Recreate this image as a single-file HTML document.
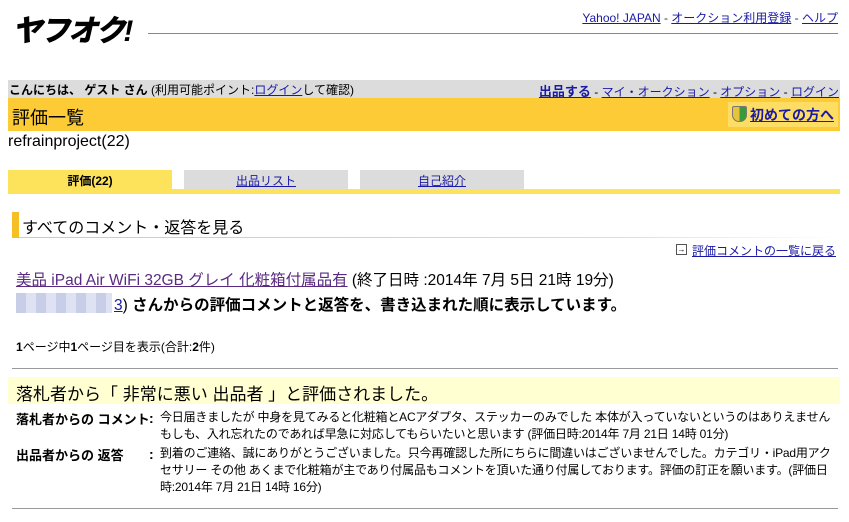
<!DOCTYPE html>
<html><head><meta charset="utf-8"><style>
body{margin:0;width:849px;height:522px;background:#fff;font-family:"Liberation Sans","Noto Sans CJK JP",sans-serif;color:#000;position:relative;overflow:hidden}
.a{position:absolute;white-space:nowrap}
a{color:#1a1aa6;text-decoration:underline}
</style></head><body>
<div class="a" style="left:12px;top:6px;font-size:30px;font-weight:900;font-style:italic;letter-spacing:-2px">ヤフオク!</div>
<div class="a" style="left:148px;top:33px;width:690px;height:1px;background:#888"></div>
<div class="a" style="right:11px;top:9px;font-size:12px;color:#333"><a href="#">Yahoo! JAPAN</a> - <a href="#">オークション利用登録</a> - <a href="#">ヘルプ</a></div>

<div class="a" style="left:8px;top:80px;width:832px;height:18px;background:#dcdcdc"></div>
<div class="a" style="left:9px;top:81px;font-size:12px"><b>こんにちは、 ゲスト さん</b> (利用可能ポイント:<a href="#">ログイン</a>して確認)</div>
<div class="a" style="right:10px;top:81px;font-size:12px"><a href="#" style="font-weight:bold;font-size:13px">出品する</a> - <a href="#">マイ・オークション</a> - <a href="#">オプション</a> - <a href="#">ログイン</a></div>

<div class="a" style="left:8px;top:98px;width:832px;height:33px;background:#fdcb36"></div>
<div class="a" style="left:12px;top:104px;font-size:18px">評価一覧</div>
<div class="a" style="left:728px;top:102px;width:110px;height:25px;background:#fddd63"></div>
<div class="a" style="left:732px;top:106px;width:13px;height:14px;background:linear-gradient(90deg,#e8c23a 50%,#3a9a3a 50%);border-radius:2px 2px 7px 7px;border:1px solid #777"></div>
<div class="a" style="left:750px;top:105px;font-size:14px;font-weight:bold"><a href="#">初めての方へ</a></div>

<div class="a" style="left:8px;top:133px;font-size:16px">refrainproject(22)</div>

<div class="a" style="left:8px;top:170px;width:164px;height:20px;background:#fde35c"></div>
<div class="a" style="left:184px;top:170px;width:164px;height:19px;background:#dcdcdc"></div>
<div class="a" style="left:360px;top:170px;width:164px;height:19px;background:#dcdcdc"></div>
<div class="a" style="left:8px;top:189px;width:832px;height:5px;background:#fde35c"></div>
<div class="a" style="left:8px;top:172px;width:164px;text-align:center;font-size:12px;font-weight:bold">評価(22)</div>
<div class="a" style="left:184px;top:172px;width:164px;text-align:center;font-size:12px"><a href="#">出品リスト</a></div>
<div class="a" style="left:360px;top:172px;width:164px;text-align:center;font-size:12px"><a href="#">自己紹介</a></div>

<div class="a" style="left:12px;top:212px;width:7px;height:26px;background:#f4c026"></div>
<div class="a" style="left:19px;top:237px;width:820px;height:1px;background:linear-gradient(90deg,#f0d040,#f5e070 70%,#fff)"></div>
<div class="a" style="left:22px;top:214px;font-size:16px">すべてのコメント・返答を見る</div>

<div class="a" style="left:676px;top:244px;width:9px;height:9px;border:1px solid #555;font-size:8px;line-height:9px;text-align:center">→</div>
<div class="a" style="left:692px;top:242px;font-size:12px"><a href="#">評価コメントの一覧に戻る</a></div>

<div class="a" style="left:16px;top:268px;font-size:15.5px"><a href="#" style="color:#5a2a80">美品 iPad Air WiFi 32GB グレイ 化粧箱付属品有</a> (終了日時 :2014年 7月 5日 21時 19分)</div>
<div class="a" style="left:16px;top:293px;width:96px;height:20px;background:repeating-linear-gradient(90deg,#c8cde8 0 10px,#dfe2f2 10px 20px)"></div>
<div class="a" style="left:114px;top:293px;font-size:15.5px"><a href="#" style="font-weight:normal">3</a>) <b>さんからの評価コメントと返答を、書き込まれた順に表示しています。</b></div>

<div class="a" style="left:16px;top:338px;font-size:12px"><b>1</b>ページ中<b>1</b>ページ目を表示(合計:<b>2</b>件)</div>

<div class="a" style="left:12px;top:368px;width:826px;height:1px;background:#999"></div>
<div class="a" style="left:8px;top:377px;width:832px;height:27px;background:#ffffd2"></div>
<div class="a" style="left:16px;top:380px;font-size:17px">落札者から「 非常に悪い 出品者 」と評価されました。</div>

<div class="a" style="left:16px;top:409px;font-size:13px;font-weight:bold">落札者からの コメント</div>
<div class="a" style="left:149px;top:410px;font-size:14px;font-weight:bold">:</div>
<div class="a" style="left:160px;top:409px;font-size:12px;line-height:17px;width:676px;white-space:normal;letter-spacing:-0.2px">今日届きましたが 中身を見てみると化粧箱とACアダプタ、ステッカーのみでした 本体が入っていないというのはありえません もしも、入れ忘れたのであれば早急に対応してもらいたいと思います (評価日時:2014年 7月 21日 14時 01分)</div>
<div class="a" style="left:16px;top:445px;font-size:13px;font-weight:bold">出品者からの 返答</div>
<div class="a" style="left:149px;top:446px;font-size:14px;font-weight:bold">:</div>
<div class="a" style="left:160px;top:445px;font-size:12px;line-height:17px;width:676px;white-space:normal;letter-spacing:-0.2px">到着のご連絡、誠にありがとうございました。只今再確認した所にちらに間違いはございませんでした。カテゴリ・iPad用アクセサリー その他 あくまで化粧箱が主であり付属品もコメントを頂いた通り付属しております。評価の訂正を願います。(評価日時:2014年 7月 21日 14時 16分)</div>

<div class="a" style="left:12px;top:508px;width:826px;height:1px;background:#999"></div>
</body></html>
